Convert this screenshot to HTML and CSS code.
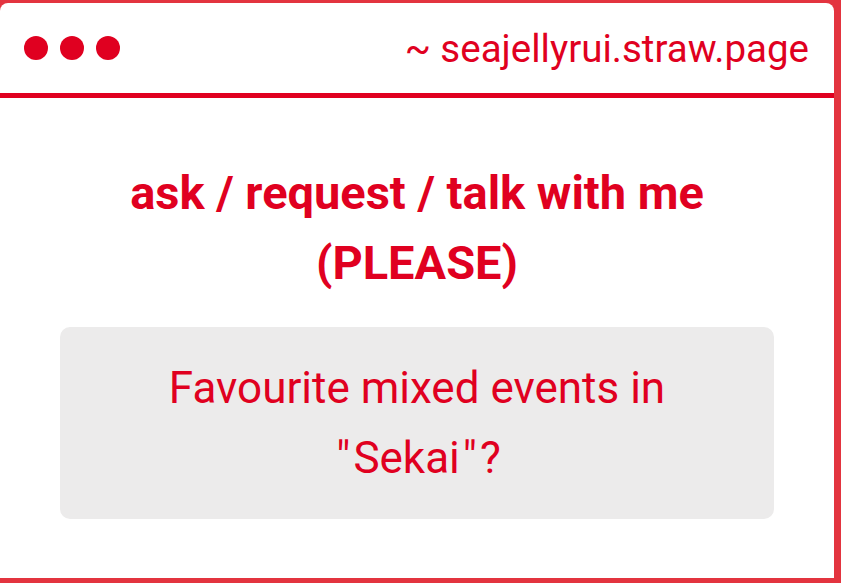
FILE: index.html
```html
<!DOCTYPE html>
<html lang="en">
<head>
    <meta charset="UTF-8">
    <meta name="viewport" content="width=device-width, initial-scale=1.0">
    <title>seajellyrui.straw.page</title>
    <link rel="stylesheet" href="styles.css">
</head>
<body>

    <div class="window">
        <!-- Title bar -->
        <div class="titlebar">
            <div class="dots">
                <span class="dot"></span>
                <span class="dot"></span>
                <span class="dot"></span>
            </div>
            <div class="url">~ seajellyrui.straw.page</div>
        </div>

        <!-- Content -->
        <div class="content">
            <h1>ask / request / talk with me<br>(PLEASE)</h1>
            <div class="question">
                <p>Favourite mixed events in<br><span class="quote">"</span>Sekai<span class="quote">"</span>?</p>
            </div>
        </div>
    </div>

</body>
</html>
```

FILE: styles.css
```css
body {
    font-family: Roboto, "Liberation Sans", sans-serif;
    background-color: #e3343f;
    color: #e00020;
    margin: 0;
    padding: 0;
    height: 583px;
    overflow: hidden;
}

.window {
    width: 834px;
    height: 575px;
    margin-top: 3px;
    background-color: #ffffff;
    border-radius: 8px 8px 0 0;
}

.titlebar {
    display: flex;
    align-items: center;
    justify-content: space-between;
    height: 90px;
    padding: 0 25px 0 24px;
    border-bottom: 5px solid #e00020;
}

.dots {
    display: flex;
    gap: 12px;
}

.dot {
    width: 24px;
    height: 24px;
    border-radius: 50%;
    background-color: #e00020;
}

.url {
    font-size: 38.5px;
}

.content {
    padding: 60px 60px 0 60px;
}

h1 {
    margin: 0 0 29px 0;
    text-align: center;
    font-size: 47px;
    font-weight: 700;
    line-height: 70px;
}

.question {
    background-color: #ecebeb;
    border-radius: 10px;
    padding: 26px 20px;
}

.question p {
    margin: 0;
    text-align: center;
    font-size: 44px;
    line-height: 70px;
}

.quote {
    margin: 0 3px;
}
```
